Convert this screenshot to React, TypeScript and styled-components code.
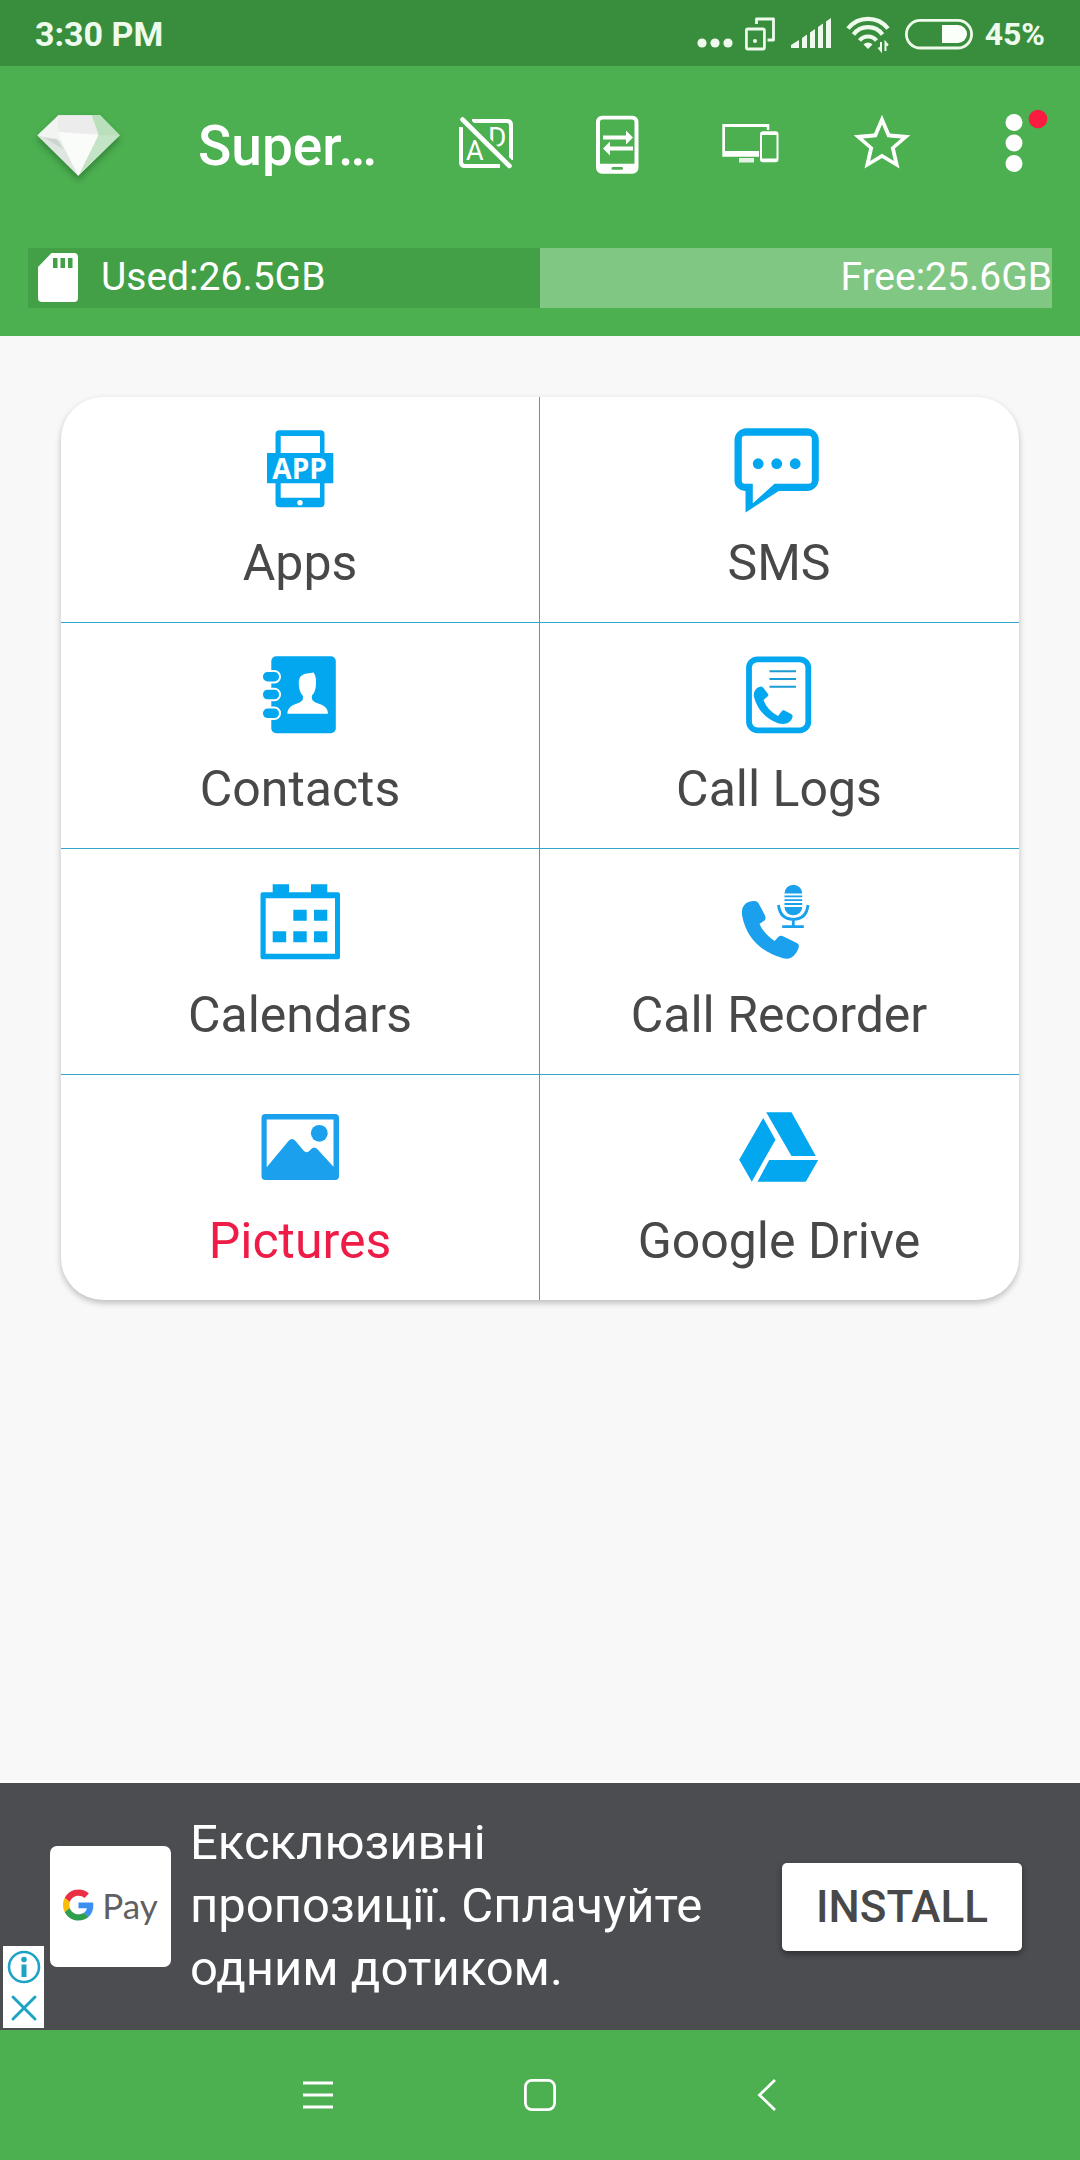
import React from 'react';
import styled, { createGlobalStyle } from 'styled-components';

const GREEN = '#4caf50';
const BLUE = '#03a7ef';
const SKY = '#1aa0ed';
const LINE = '#35a5cb';

const GlobalStyle = createGlobalStyle`
  *, *::before, *::after { box-sizing: border-box; }
  body {
    margin: 0;
    background: #f8f8f8;
    font-family: Roboto, "Noto Sans", sans-serif;
  }
  button {
    margin: 0;
    padding: 0;
    border: 0;
    background: none;
    font: inherit;
    color: inherit;
    cursor: pointer;
  }
  svg { display: block; overflow: visible; }
`;

const Screen = styled.div`
  display: flex;
  flex-direction: column;
  min-height: 100vh;
`;

const StatusBar = styled.div`
  display: flex;
  align-items: center;
  justify-content: space-between;
  height: 66px;
  padding: 1px 35px 0;
  background: #388e3c;
  color: #eefbec;
  font-size: 34px;
  font-weight: 700;
`;

const StatusIcons = styled.div`
  display: flex;
  align-items: center;
  gap: 10px;
`;

const BatteryLevel = styled.span`
  font-size: 32px;
`;

const Header = styled.header`
  background: ${GREEN};
  color: #fff;
  padding-bottom: 28px;
`;

const Toolbar = styled.div`
  display: flex;
  align-items: center;
  height: 154px;
  margin-bottom: 28px;
`;

const LogoButton = styled.button`
  display: flex;
  flex: none;
  width: 198px;
  padding-left: 34px;
`;

const DiamondSvg = styled.svg`
  filter: drop-shadow(0 4px 3px rgba(20, 80, 30, 0.45));
`;

const Title = styled.h1`
  flex: 1;
  min-width: 0;
  margin: 0;
  padding-top: 6px;
  font-size: 55px;
  font-weight: 500;
  line-height: 66px;
  white-space: nowrap;
`;

const ToolButton = styled.button`
  display: flex;
  flex: none;
  align-items: center;
  justify-content: center;
  width: 132px;
  height: 132px;
`;

const Storage = styled.div`
  display: grid;
  grid-template-columns: 1fr 1fr;
  height: 60px;
  margin: 0 28px;
  font-size: 39px;
  line-height: 58px;
`;

const Used = styled.div`
  display: flex;
  gap: 19px;
  padding-left: 8px;
  background: #43a047;
  svg { margin-top: 5px; }
`;

const Free = styled.div`
  background: #81c784;
  text-align: right;
`;

const Main = styled.main`
  flex: 1;
  padding: 61px;
`;

const Card = styled.div`
  display: grid;
  grid-template-columns: 1fr 1fr;
  overflow: hidden;
  border-radius: 42px;
  background: #fff;
  box-shadow: 0 3px 6px rgba(0, 0, 0, 0.24);
`;

const Tile = styled.button<{ $last: boolean }>`
  display: flex;
  flex-direction: column;
  align-items: center;
  gap: 20px;
  padding: 28px 0 29px;
  border-bottom: ${(p) => (p.$last ? '0' : `1px solid ${LINE}`)};
  &:nth-child(odd) {
    border-right: 1px solid ${LINE};
  }
  &:nth-child(even) {
    padding-right: 1px;
  }
`;

const TileLabel = styled.span<{ $alert?: boolean }>`
  font-size: 50px;
  line-height: 60px;
  color: ${(p) => (p.$alert ? '#ee1c47' : '#484848')};
`;

const Banner = styled.aside`
  position: relative;
  display: flex;
  align-items: center;
  gap: 19px;
  min-height: 250px;
  padding: 0 58px 0 50px;
  border-top: 3px solid #fff;
  background: #4b4d51;
`;

const PayTile = styled.div`
  display: flex;
  flex: none;
  align-items: center;
  justify-content: center;
  gap: 8px;
  width: 121px;
  height: 121px;
  padding-bottom: 3px;
  border-radius: 7px;
  background: #fff;
  color: #5f6063;
  font-family: Lato, sans-serif;
  font-size: 35px;
`;

const BannerText = styled.p`
  flex: 1;
  margin: 0;
  padding: 0 32px 2px 0;
  color: #fff;
  font-size: 49px;
  line-height: 63px;
`;

const InstallButton = styled.button`
  flex: none;
  width: 240px;
  height: 88px;
  border-radius: 5px;
  background: #fff;
  color: #484848;
  font-size: 44px;
  font-weight: 500;
  box-shadow: 0 3px 6px rgba(0, 0, 0, 0.4);
`;

const AdChoices = styled.div`
  position: absolute;
  left: 3px;
  bottom: 2px;
  display: grid;
  background: #fff;
`;

const ChoiceButton = styled.button`
  display: grid;
  place-items: center;
  width: 41px;
  height: 41px;
`;

const NavBar = styled.nav`
  display: flex;
  justify-content: center;
  height: 130px;
  background: ${GREEN};
`;

const NavButton = styled.button`
  display: flex;
  align-items: center;
  justify-content: center;
  width: 222px;
`;

const StatusGlyphs = () => (
  <>
    <svg width="36" height="40" fill="#eefbec">
      <circle cx="5" cy="29" r="4.6" />
      <circle cx="18" cy="29" r="4.6" />
      <circle cx="31" cy="29" r="4.6" />
    </svg>
    <svg width="36" height="40" fill="none" stroke="#eefbec" strokeWidth="2.8">
      <rect x="3.4" y="15" width="18" height="20" rx="1.5" />
      <path d="M13.5 10V5h17v21h-6" strokeLinejoin="round" />
      <circle cx="12" cy="27" r="2" fill="#eefbec" stroke="none" />
    </svg>
    <svg width="44" height="40" fill="#eefbec">
      <path d="M2 34v-3l8-5v8zM13 34V24l5-3.500v13.500zM21 34V18.500l5-3.500v19zM29 34V13l5-3.500v24.500zM37 34V7.500l5-3.500v30z" />
    </svg>
    <svg width="50" height="40" fill="none" stroke="#eefbec" strokeWidth="4.2">
      <path d="M5 14.500a25.500 25.500 0 0 1 40 0" />
      <path d="M10.500 20.500a18 18 0 0 1 29 0" />
      <path d="M16.500 26.500a11 11 0 0 1 17 0" />
      <path d="M25 35l-4.500-4.500a6 6 0 0 1 9 0z" fill="#eefbec" stroke="none" />
      <path d="M38 28v8.500l-2.500-3M42.500 37v-8.500l2.500 3" strokeWidth="2" />
    </svg>
    <svg width="72" height="40" fill="none" stroke="#eefbec" strokeWidth="2.800">
      <rect x="3.400" y="6.400" width="65.200" height="27.600" rx="13.800" />
      <path d="M39 11h16a9 9 0 0 1 0 18h-16z" fill="#fbfff9" stroke="none" />
    </svg>
  </>
);

const Diamond = () => (
  <DiamondSvg width="88" height="72" viewBox="0 0 88 72">
    <path d="M24.300 8.300H66L85.700 28.300 44.300 68.700 3.300 28.300z" fill="#f1f4f1" />
    <path d="M57.700 8.300H66L85.700 28.300 44.300 68.700 64.300 28.300z" fill="#c4e4c6" />
    <path d="M66 8.300L85.700 28.300H64.300L57.700 8.300z" fill="#b9dfbb" />
    <path d="M24.300 8.300H57.700L64.300 27 24 25z" fill="#ececec" />
    <path d="M3.300 28.300L26.500 34 44.300 68.700z" fill="#dfe6df" />
    <path d="M10 30.500L23 32 29 42z" fill="#cdd3cd" />
    <path d="M24 25L64.300 28.300 44.300 68.700 28 36z" fill="#fafcfa" />
  </DiamondSvg>
);

const AdOff = () => (
  <svg width="66" height="66" viewBox="0 0 66 66" fill="none" stroke="#fff">
    <path d="M8 17v35q0 4 4 4h35M19 11h35q4 0 4 4v35" strokeWidth="4" />
    <g fill="#fff" stroke="none" fontFamily="Roboto, sans-serif" fontWeight="400">
      <text x="13" y="49.500" fontSize="27">A</text>
      <text x="35" y="37" fontSize="28">D</text>
    </g>
    <path d="M10 10L56 55" stroke={GREEN} strokeWidth="11" />
    <path d="M9.500 9.500L56.500 56" strokeWidth="4.600" strokeLinecap="round" />
  </svg>
);

const PhoneTransfer = () => (
  <svg width="66" height="66" viewBox="0 0 66 66">
    <path
      fill="#fff"
      fillRule="evenodd"
      d="M17 5.700h30.500a6 6 0 0 1 6 6v46a6 6 0 0 1-6 6H17a6 6 0 0 1-6-6v-46a6 6 0 0 1 6-6zM17.500 9.500a2.500 2.500 0 0 0-2.500 2.500v41.700h34.500V12a2.500 2.500 0 0 0-2.500-2.500z"
    />
    <path fill="#fff" d="M18 25.500h23v-5l7 7-7 7v-5H18zM48 36.500H25v-5l-7 7 7 7v-5h23z" />
    <rect x="26.500" y="57" width="11.500" height="2.800" rx="1.400" fill={GREEN} />
  </svg>
);

const Devices = () => (
  <svg width="66" height="66" viewBox="0 0 66 66" fill="#fff">
    <path fillRule="evenodd" d="M5.300 14h47v6h-2.500v-3H8v24h34v5.700H5.300z" />
    <rect x="22" y="48" width="15" height="4.500" opacity=".85" />
    <path fillRule="evenodd" d="M46 21.300h12.500a3 3 0 0 1 3 3v25a3 3 0 0 1-3 3H46a3 3 0 0 1-3-3v-25a3 3 0 0 1 3-3zM45 25v23.500h14.500V25z" />
  </svg>
);

const Star = () => (
  <svg width="68" height="68" viewBox="0 0 24 24" fill="#fff">
    <path d="M22 9.240l-7.190-.62L12 2 9.190 8.630 2 9.240l5.460 4.730L5.820 21 12 17.270 18.180 21l-1.630-7.030L22 9.240zM12 15.800l-4.180 2.530 1.100-4.740-3.660-3.190 4.840-.41L12 5.500l1.900 4.490 4.840.41-3.660 3.190 1.100 4.740z" />
  </svg>
);

const More = () => (
  <svg width="66" height="66" viewBox="0 0 66 66" fill="#fff">
    <circle cx="33" cy="12.500" r="8.500" />
    <circle cx="33" cy="33" r="8.500" />
    <circle cx="33" cy="53.500" r="8.500" />
    <circle cx="57" cy="9" r="9.300" fill="#fb1a40" />
  </svg>
);

const SdCard = () => (
  <svg width="46" height="50" viewBox="0 0 46 50">
    <path fill="#fff" d="M15.500 0H38a4 4 0 0 1 4 4v41a4 4 0 0 1-4 4H6a4 4 0 0 1-4-4V14z" />
    <path fill="#43a047" d="M17 5h4.500v10H17zM24.500 5H29v10h-4.500zM32 5h4.500v10H32z" />
  </svg>
);

const AppsIcon = () => (
  <svg width="88" height="88" viewBox="0 0 88 88">
    <path
      fill={BLUE}
      fillRule="evenodd"
      d="M23.500 5.300h41a4 4 0 0 1 4 4V28H77.300v30.300H68.500v20a4 4 0 0 1-4 4h-41a4 4 0 0 1-4-4v-20H11V28h8.500V9.300a4 4 0 0 1 4-4zM24.700 11v17H64V11zM24.700 58.300v14.400H64V58.300z"
    />
    <circle cx="44" cy="77.700" r="2.700" fill="#fff" />
    <text x="43.600" y="53.500" textAnchor="middle" fill="#fff" fontFamily="'Open Sans', 'Noto Sans', sans-serif" fontWeight="700" fontSize="28">
      APP
    </text>
  </svg>
);

const SmsIcon = () => (
  <svg width="88" height="88" viewBox="0 0 88 88" fill={BLUE}>
    <path
      fillRule="evenodd"
      d="M11.500 3.300h60.300a12 12 0 0 1 12 12V54a12 12 0 0 1-12 12h-28L10.500 87.500V66A10.500 10.500 0 0 1-.5 55.500V15.300a12 12 0 0 1 12-12zM10 10.700Q6.800 10.700 6.800 14v41.500q0 3.200 3.200 3.200h7.800v19.600l21.700-19.600H73.500q3.300 0 3.300-3.200V14q0-3.300-3.300-3.300z"
    />
    <circle cx="23.200" cy="38.700" r="5.400" />
    <circle cx="41.700" cy="38.700" r="5.400" />
    <circle cx="60.200" cy="38.700" r="5.400" />
  </svg>
);

const ContactsIcon = () => (
  <svg width="88" height="88" viewBox="0 0 88 88" fill={BLUE}>
    <rect x="15.300" y="5.300" width="64.500" height="77" rx="5" />
    {[25.700, 43.500, 62.300].map((y) => (
      <rect key={y} x="6" y={y - 5.700} width="18" height="11.400" rx="5.500" stroke="#fff" strokeWidth="2" />
    ))}
    <path
      fill="#fff"
      d="M45 25q3-3 8-2.800l4.500-.7q3 4 2.500 11c-.2 6-1.500 9.500-4 12-.8 4 1 6 5 7.500 7 2.500 10.700 4.500 11 10.700H31.300c.5-6.200 4-8.200 11-10.700 4-1.500 5.200-3.500 4.500-7.500-2.500-2.500-3.800-6-4-12q-.3-5 2.200-7.500z"
    />
  </svg>
);

const CallLogsIcon = () => (
  <svg width="88" height="88" viewBox="0 0 88 88" fill={BLUE}>
    <rect x="14" y="8.300" width="59.300" height="71" rx="8.500" fill="none" stroke={BLUE} strokeWidth="5.800" />
    <path d="M34.500 20.300h26.500M34.500 28h26.500M34.500 35.800h26.500" stroke="#1d9cd3" strokeWidth="2" />
    <path d="M20 39.500Q22 36 26 35.500q1.500 0 2.500 1.500l4.500 6q1 1.500-.5 2.500l-4 3.500Q32 59 43 65l3.500-4.500q1.500-2 3.500-.7l6.500 3.500q1.500 1 1 3-.7 3-3.500 5-4 3-11 1Q24 65 19 46q-.7-4 1-6.500z" />
  </svg>
);

const CalendarIcon = () => (
  <svg width="88" height="88" viewBox="0 0 88 88" fill={BLUE}>
    <path
      fillRule="evenodd"
      d="M6.500 15.300H16.700v-8H33v8h22v-8h16.300v8H82a2 2 0 0 1 2 2v63a2 2 0 0 1-2 2H6.500a2 2 0 0 1-2-2v-63a2 2 0 0 1 2-2zM9.700 21.300v55.400H79V21.300z"
    />
    <path d="M37.300 32.700h13.400v11H37.300zM58 32.700h13.300v11H58zM16.700 54.300h13.500v11H16.700zM37.300 54.300h13.400v11H37.300zM58 54.300h13.300v11H58z" />
  </svg>
);

const RecorderIcon = () => (
  <svg width="88" height="88" viewBox="0 0 88 88" fill={SKY}>
    <path d="M7 33.500Q8 27 13.500 25q4-1.500 7.500-.7 1.500.3 2.500 2L30 38.500q1.300 3-.5 5l-5 3.500Q29 57 39.500 64l4-4.300q2-1.500 5-.3l13.300 6.500q2.700 1.500 2 4Q62 77 56 80.800q-3.500 1.700-8 .5Q13 71 7 38z" />
    <path d="M49.500 16.500a8.800 8.800 0 0 1 17.700 0zM49.500 18.500h17.700v1.800H49.500zM49.500 22.300h17.700v1.800H49.500zM49.500 26.100h17.700v1.800H49.500zM49.500 30h17.700a8.800 8.300 0 0 1-17.700 0z" />
    <path d="M43.500 28c1 9 6 14.300 14.800 14.300S72 37 73 28M58.300 42v8M47.200 49.700h21.600" fill="none" stroke={SKY} strokeWidth="2.800" />
  </svg>
);

const PicturesIcon = () => (
  <svg width="88" height="88" viewBox="0 0 88 88" fill={SKY}>
    <path
      fillRule="evenodd"
      d="M9.500 11h69.500a4 4 0 0 1 4 4v58a4 4 0 0 1-4 4H9.500a4 4 0 0 1-4-4V15a4 4 0 0 1 4-4zM10.700 16.500v47.800L32.500 38q3.500-4 7 0l8 9.500q2.500 3 5.500.7l2.200-2.200q3-3 6 0L77.500 63.700V16.500z"
    />
    <circle cx="63.300" cy="30.300" r="8.400" />
  </svg>
);

const DriveIcon = () => (
  <svg width="88" height="88" viewBox="0 0 88 88" fill={BLUE}>
    <path d="M31.200 9.300h25.300L80.800 53H56.500zM28.200 15l12.300 21.700-23.700 42L4.200 56.700zM34.200 57h49L70.800 78.700H22.500z" />
  </svg>
);

const GoogleG = () => (
  <svg width="31" height="32" viewBox="0 0 48 48">
    <path fill="#ea2f44" d="M24 9.500c3.540 0 6.710 1.220 9.210 3.600l6.850-6.850C35.900 2.380 30.470 0 24 0 14.620 0 6.510 5.380 2.560 13.220l7.980 6.190C12.430 13.720 17.740 9.500 24 9.500z" />
    <path fill="#3b8ff0" d="M46.980 24.550c0-1.570-.15-3.090-.38-4.550H24v9.020h12.940c-.58 2.960-2.260 5.480-4.780 7.180l7.730 6c4.510-4.180 7.090-10.360 7.090-17.650z" />
    <path fill="#fbbc05" d="M10.530 28.590c-.48-1.450-.76-2.990-.76-4.590s.27-3.140.76-4.590l-7.980-6.190C.92 16.460 0 20.120 0 24c0 3.880.92 7.540 2.560 10.780l7.970-6.190z" />
    <path fill="#2f9e4d" d="M24 48c6.480 0 11.930-2.130 15.890-5.810l-7.730-6c-2.150 1.450-4.920 2.300-8.160 2.300-6.260 0-11.570-4.220-13.470-9.910l-7.980 6.190C6.510 42.620 14.620 48 24 48z" />
  </svg>
);

const tiles = [
  { label: 'Apps', Icon: AppsIcon },
  { label: 'SMS', Icon: SmsIcon },
  { label: 'Contacts', Icon: ContactsIcon },
  { label: 'Call Logs', Icon: CallLogsIcon },
  { label: 'Calendars', Icon: CalendarIcon },
  { label: 'Call Recorder', Icon: RecorderIcon },
  { label: 'Pictures', Icon: PicturesIcon, alert: true },
  { label: 'Google Drive', Icon: DriveIcon },
];

const tools = [
  { name: 'Remove ads', Icon: AdOff },
  { name: 'Transfer', Icon: PhoneTransfer },
  { name: 'Devices', Icon: Devices },
  { name: 'Rate', Icon: Star },
  { name: 'More options', Icon: More },
];

export default function App() {
  return (
    <>
      <GlobalStyle />
      <Screen>
        <StatusBar>
          <span>3:30 PM</span>
          <StatusIcons>
            <StatusGlyphs />
            <BatteryLevel>45%</BatteryLevel>
          </StatusIcons>
        </StatusBar>
        <Header>
          <Toolbar>
            <LogoButton aria-label="Premium">
              <Diamond />
            </LogoButton>
            <Title>Super…</Title>
            {tools.map(({ name, Icon }) => (
              <ToolButton key={name} aria-label={name}>
                <Icon />
              </ToolButton>
            ))}
          </Toolbar>
          <Storage>
            <Used>
              <SdCard />
              <span>Used:26.5GB</span>
            </Used>
            <Free>Free:25.6GB</Free>
          </Storage>
        </Header>
        <Main>
          <Card>
            {tiles.map(({ label, Icon, alert }, i) => (
              <Tile key={label} $last={i >= tiles.length - 2}>
                <Icon />
                <TileLabel $alert={alert}>{label}</TileLabel>
              </Tile>
            ))}
          </Card>
        </Main>
        <Banner>
          <PayTile>
            <GoogleG />
            <span>Pay</span>
          </PayTile>
          <BannerText>Ексклюзивні пропозиції. Сплачуйте одним дотиком.</BannerText>
          <InstallButton>INSTALL</InstallButton>
          <AdChoices>
            <ChoiceButton aria-label="Ad information">
              <svg width="34" height="34" fill="none" stroke="#1fa3c4" strokeWidth="2.600">
                <circle cx="17" cy="17" r="15" />
                <path d="M17 14.500v12.500" strokeWidth="5" />
                <circle cx="17" cy="9.500" r="2.800" fill="#1fa3c4" stroke="none" />
              </svg>
            </ChoiceButton>
            <ChoiceButton aria-label="Close ad">
              <svg width="26" height="26" stroke="#1fa3c4" strokeWidth="3" strokeLinecap="round">
                <path d="M2 2l22 22M24 2L2 24" />
              </svg>
            </ChoiceButton>
          </AdChoices>
        </Banner>
        <NavBar>
          <NavButton aria-label="Recent apps">
            <svg width="32" height="32" stroke="#fff" strokeWidth="2.800">
              <path d="M1 4h30M1 16h30M1 28h30" />
            </svg>
          </NavButton>
          <NavButton aria-label="Home">
            <svg width="32" height="32" fill="none" stroke="#fff" strokeWidth="2.800">
              <rect x="1.400" y="1.400" width="29.200" height="29.200" rx="6.500" />
            </svg>
          </NavButton>
          <NavButton aria-label="Back">
            <svg width="32" height="32" fill="none" stroke="#fff" strokeWidth="2.800">
              <path d="M29 1L13.500 16 29 31" />
            </svg>
          </NavButton>
        </NavBar>
      </Screen>
    </>
  );
}
